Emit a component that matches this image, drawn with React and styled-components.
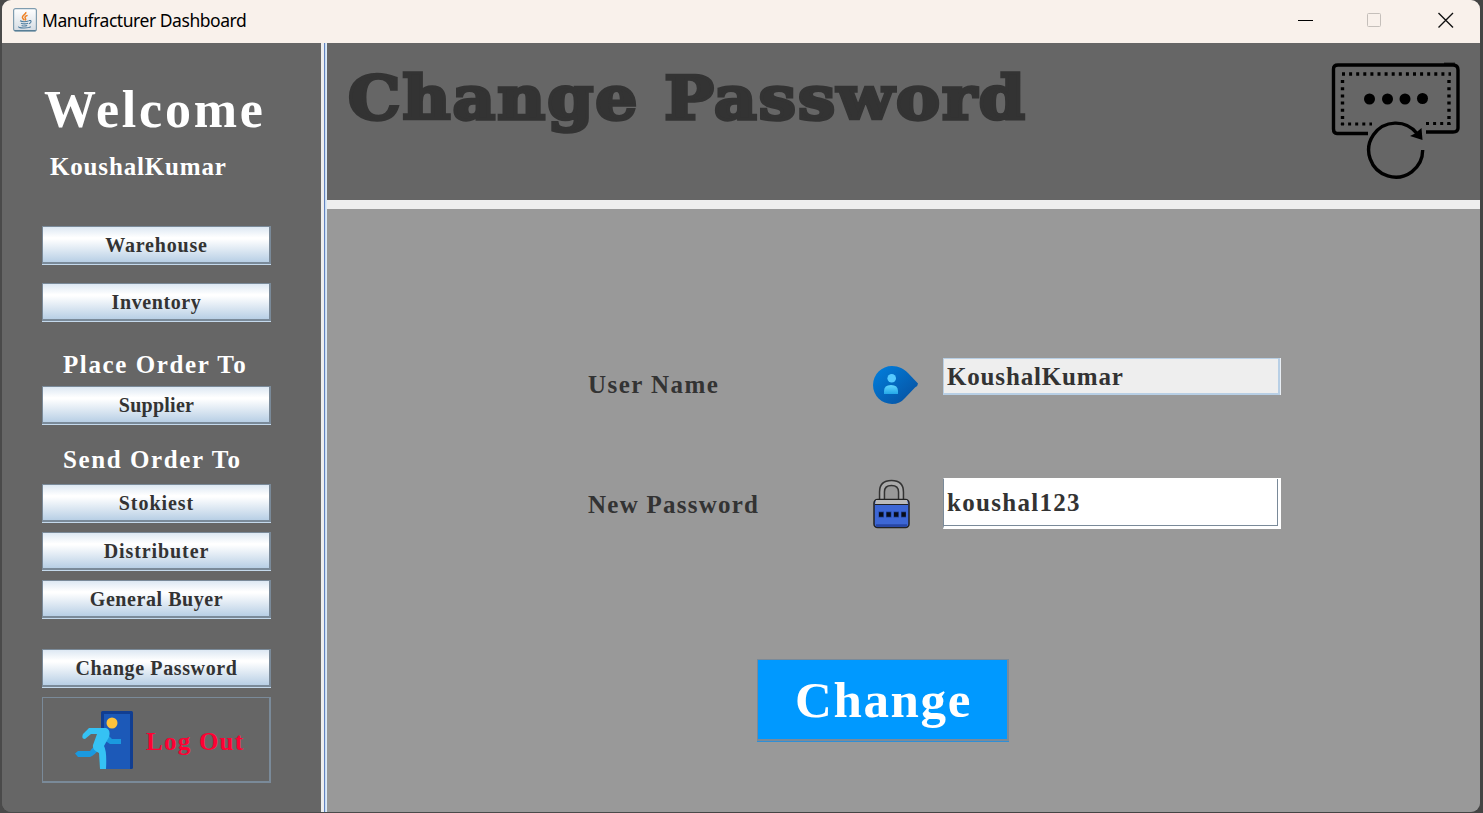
import React from "react";
import styled, { createGlobalStyle } from "styled-components";

const Global = createGlobalStyle`
  * { box-sizing: border-box; }
  body { margin: 0; background: #3a3b3c; overflow: hidden; }
`;

const Desktop = styled.div`
  width: 1483px;
  height: 813px;
  padding: 0 3px 1px 2px;
  background: linear-gradient(90deg, #4a4a4a 0 700px, #444 700px);
`;

const Frame = styled.div`
  display: flex;
  flex-direction: column;
  width: 1478px;
  height: 812px;
  border-radius: 9px;
  overflow: hidden;
  background: #666;
  color: #333;
  font-family: "Baskerville Old Face", "Liberation Serif", serif;
  font-weight: bold;
`;

const TitleBar = styled.header`
  display: flex;
  align-items: center;
  flex: none;
  height: 43px;
  padding: 0 25px 3px 11px;
  background: #f9f1eb;
  color: #000;
`;

const WindowTitle = styled.span`
  flex: 1;
  margin-left: 5px;
  font: 400 17.5px "Noto Sans", sans-serif;
  letter-spacing: -0.45px;
  white-space: nowrap;
`;

const Controls = styled.div`
  display: flex;
  gap: 50px;
  svg { display: block; }
  svg:last-child { margin-left: 2px; }
`;

const Content = styled.div`
  display: flex;
  flex: 1;
  min-height: 0;
`;

const Sidebar = styled.nav`
  display: flex;
  flex-direction: column;
  width: 319px;
  padding-left: 40px;
  background: #666;
  color: #fff;
`;

const Divider = styled.div`
  width: 6px;
  border-left: 3px solid #eee;
  background: linear-gradient(90deg, #6382bf 0 1px, #c8ddf2 1px 2px, #dceaf8 2px);
`;

const Text = styled.div`
  font-size: ${(p) => p.$size || 25}px;
  line-height: ${(p) => p.$line || 30}px;
  letter-spacing: ${(p) => p.$space}px;
  margin: ${(p) => p.$margin || 0};
  white-space: nowrap;
`;

const MenuButton = styled.button`
  display: block;
  flex: none;
  width: 229px;
  height: 38px;
  margin: ${(p) => p.$top}px 0 1px;
  padding: 1px 0 0 1px;
  border: solid #7a8a99;
  border-width: 1px 2px 2px 1px;
  background: linear-gradient(#dde8f3, #fff 30%, #fff 34%, #b8cfe5);
  box-shadow: 0 1px #c4d9ec;
  color: #333;
  font: bold 20px "Baskerville Old Face", "Liberation Serif", serif;
  letter-spacing: ${(p) => p.$space}px;
`;

const LogoutButton = styled.button`
  display: flex;
  align-items: center;
  flex: none;
  width: 229px;
  height: 86px;
  margin-top: 9px;
  padding: 1px 0 0 32px;
  gap: 13px;
  border: solid #7a8a99;
  border-width: 1px 2px 2px 1px;
  background: transparent;
  color: #ff0033;
  font: bold 25px "Baskerville Old Face", "Liberation Serif", serif;
  letter-spacing: 1.25px;
  white-space: nowrap;
  span { margin-top: 4px; }
`;

const Main = styled.main`
  display: flex;
  flex-direction: column;
  flex: 1;
  min-width: 0;
`;

const Banner = styled.div`
  display: flex;
  justify-content: space-between;
  align-items: flex-start;
  height: 166px;
  padding: 18px 19px 0 21px;
  border-bottom: 9px solid #eee;
  background: #666;
`;

const Heading = styled.h1`
  margin: 0;
  font: bold 60px/74px "Cooper Black", "DejaVu Serif", serif;
  letter-spacing: 1.8px;
  color: #333;
  -webkit-text-stroke: 3.4px #333;
  transform: scaleX(1.1);
  transform-origin: left;
  white-space: nowrap;
`;

const Form = styled.form`
  flex: 1;
  padding: 149px 0 0 261px;
  background: #999;
`;

const Field = styled.label`
  display: grid;
  grid-template-columns: 284px 71px 338px;
  align-items: start;
  height: 120px;
`;

const Input = styled.input`
  width: ${(p) => (p.readOnly ? 337 : 338)}px;
  height: ${(p) => (p.readOnly ? 37 : 51)}px;
  padding: ${(p) => (p.readOnly ? 2 : 1)}px 0 0 3px;
  border: solid ${(p) => (p.readOnly ? "#b8cfe5" : "#fff")};
  border-width: ${(p) => (p.readOnly ? "1px 2px 2px 1px" : "1px 3px 3px 1px")};
  border-left-color: ${(p) => (p.readOnly ? "#b8cfe5" : "#7a8a99")};
  outline: 0;
  background: ${(p) => (p.readOnly ? "#eee" : "#fff")};
  box-shadow: ${(p) => (p.readOnly ? "1px 0 #e8eef4" : "inset -1px -1px #7a8a99")};
  color: #333;
  font: bold 25px "Baskerville Old Face", "Liberation Serif", serif;
  letter-spacing: ${(p) => p.$space}px;
`;

const ChangeButton = styled.button`
  display: block;
  width: 252px;
  height: 82px;
  margin: 61px 0 0 169px;
  padding: 1px 0 0 2px;
  border: solid #7a8a99;
  border-width: 1px 2px 2px 1px;
  background: #0099ff;
  box-shadow: 0 1px #2f8fd6;
  color: #fff;
  font: bold 51px "Baskerville Old Face", "Liberation Serif", serif;
  letter-spacing: 1.6px;
`;

const JavaIcon = () => (
  <svg width="24" height="24" viewBox="0 0 24 24" fill="none">
    <defs>
      <linearGradient id="java" x1="0" y1="0" x2="0" y2="1">
        <stop stopColor="#fff" /><stop offset="1" stopColor="#d5dce3" />
      </linearGradient>
    </defs>
    <rect x=".6" y=".6" width="22.8" height="22.3" rx="2" fill="url(#java)" stroke="#7f9caf" strokeWidth="1.2" />
    <path d="M1.5 22.8h21" stroke="#3f6c86" />
    <path d="M12.8 4c1 2-4 3.200-3.400 5.600.3 1 1.500 1.700 1.800 2.700M14.600 7.400c-2 .6-3.200 1.600-2.300 2.800.7.900.5 1.600-.2 2.200" stroke="#ee8124" strokeWidth="1.500" />
    <path d="M7 12.800c2 1 6 .9 8.500.1M8 15.200c2 .8 5 .8 7.200.1M8.600 17.400c1.500.7 4 .7 5.600.1M15.800 12.600c3-.8 2.900 2.200.3 3M5.600 18.600c-.8 1.700 10 2 12.200.1" stroke="#4f7d9f" strokeWidth="1.100" />
  </svg>
);

const PasswordIcon = () => (
  <svg width="130" height="120" viewBox="0 0 130 120" fill="none" stroke="#000">
    <path d="M37 72.500H6Q2.500 72.500 2.500 68V8Q2.500 4 7 4H122Q127 4 127 9V67Q127 71 122 71H95" strokeWidth="3.400" />
    <path d="M113 2.200h11" strokeWidth="1" />
    <path d="M11 13H120" strokeWidth="3.600" strokeDasharray="3 4.100" />
    <path d="M11.500 19V64M118 19V64" strokeWidth="3.400" strokeDasharray="3 4.200" />
    <path d="M10 63H41M95 62.500H120" strokeWidth="3.200" strokeDasharray="3 4.100" />
    <g fill="#000" stroke="none">
      <circle cx="38.500" cy="38" r="5.500" /><circle cx="56.500" cy="38" r="5.500" />
      <circle cx="74" cy="38" r="5.500" /><circle cx="91.500" cy="37.500" r="5.500" />
      <path d="M90.500 67L91.500 79 79 75 84 72.500Z" />
    </g>
    <path d="M91.700 89A27 27 0 1 1 86 72.500" strokeWidth="3.400" />
  </svg>
);

const LogoutIcon = () => (
  <svg width="58" height="58" viewBox="0 0 58 58">
    <rect x="26" y="0" width="32" height="58" rx="1.500" fill="#113e91" />
    <rect x="29" y="3" width="26" height="55" fill="#1c59b8" />
    <circle cx="37" cy="12" r="5.500" fill="#ffc33b" />
    <path d="M21 33L15 40H3L0 42.500 3 46H15Q20 44 26 36ZM32 23L37 28H46V33H35L29 29Z" fill="#1a99df" />
    <path d="M14 17H31Q36 19 34 26L29 35Q32 40 31 58H25L24 42Q17 39 18 34L22 23H16L10 28Q6 28 8 23Z" fill="#35c2f4" />
  </svg>
);

const FieldIcon = styled.svg`
  display: block;
  margin: ${(p) => p.$top}px 0 0 1px;
`;

const UserIcon = () => (
  <FieldIcon $top={8} width="45" height="38" viewBox="0 0 45 38">
    <defs>
      <linearGradient id="pin" x1="0" y1="0" x2="1" y2="1">
        <stop stopColor="#0080df" /><stop offset="1" stopColor="#084e9c" />
      </linearGradient>
      <linearGradient id="person" x1="0" y1="0" x2="0" y2="1">
        <stop stopColor="#62d6ff" /><stop offset="1" stopColor="#24a8e8" />
      </linearGradient>
    </defs>
    <path d="M19 0C26 0 31 3 35 7L45 17.500Q45 20 42 21.500L32 32Q27 38 19 38A19 19 0 0 1 19 0Z" fill="url(#pin)" />
    <circle cx="18.700" cy="12.300" r="4.300" fill="#55caff" />
    <path d="M11 28V25Q11 19 18 19T25 25V28Z" fill="url(#person)" />
  </FieldIcon>
);

const LockIcon = () => (
  <FieldIcon $top={1} width="37" height="50" viewBox="0 0 37 50">
    <path d="M9 22V13Q9 4 18.500 4T28 13V22" fill="none" stroke="#333" strokeWidth="6.400" />
    <path d="M9 22V13Q9 4 18.500 4T28 13V22" fill="none" stroke="#aaa" strokeWidth="3.400" />
    <rect x="1" y="20.500" width="35" height="28" rx="3.500" fill="#3d67d5" stroke="#222" strokeWidth="1.500" />
    <path d="M3 21H34L35 25H2Z" fill="#bbb" />
    <path d="M2 25.500H35" stroke="#222" strokeWidth="1.200" />
    <path d="M3 46.500H34" stroke="#2746a5" strokeWidth="2.500" />
    <path d="M5.500 35.500H33" stroke="#24469d" strokeWidth="6" strokeDasharray="5.500 2" />
    <path d="M6 35.500H33" stroke="#080c19" strokeWidth="4.400" strokeDasharray="4.300 3.200" />
  </FieldIcon>
);

export default function App() {
  return (
    <Desktop>
      <Global />
      <Frame>
        <TitleBar>
          <JavaIcon />
          <WindowTitle>Manufracturer Dashboard</WindowTitle>
          <Controls>
            <svg width="20" height="18"><path d="M3 9.500H18" stroke="#000" strokeWidth="1" /></svg>
            <svg width="20" height="18" fill="none"><rect x="2.500" y="2.500" width="13" height="13" rx="1" stroke="#c5bfba" /></svg>
            <svg width="18" height="18"><path d="M1.500 2L16 16.500M16 2L1.500 16.500" stroke="#111" strokeWidth="1.400" /></svg>
          </Controls>
        </TitleBar>
        <Content>
          <Sidebar>
            <Text $size={52} $line={60} $space={2.8} $margin="37px 0 0 2px">Welcome</Text>
            <Text $space={0.83} $margin="12px 0 0 8px">KoushalKumar</Text>
            <MenuButton $top={44} $space={0.8}>Warehouse</MenuButton>
            <MenuButton $top={18} $space={0.6}>Inventory</MenuButton>
            <Text $space={1.6} $margin="28px 0 0 21px">Place Order To</Text>
            <MenuButton $top={6} $space={0.25}>Supplier</MenuButton>
            <Text $space={1.6} $margin="20px 0 0 21px">Send Order To</Text>
            <MenuButton $top={9} $space={0.95}>Stokiest</MenuButton>
            <MenuButton $top={9} $space={0.9}>Distributer</MenuButton>
            <MenuButton $top={9} $space={0.56}>General Buyer</MenuButton>
            <MenuButton $top={30} $space={0.62}>Change Password</MenuButton>
            <LogoutButton><LogoutIcon /><span>Log Out</span></LogoutButton>
          </Sidebar>
          <Divider />
          <Main>
            <Banner>
              <Heading>Change Password</Heading>
              <PasswordIcon />
            </Banner>
            <Form onSubmit={(e) => e.preventDefault()}>
              <Field>
                <Text $space={1.45} $margin="12px 0 0">User Name</Text>
                <UserIcon />
                <Input readOnly $space={0.83} value="KoushalKumar" />
              </Field>
              <Field>
                <Text $space={1.25} $margin="12px 0 0">New Password</Text>
                <LockIcon />
                <Input $space={1.3} defaultValue="koushal123" />
              </Field>
              <ChangeButton>Change</ChangeButton>
            </Form>
          </Main>
        </Content>
      </Frame>
    </Desktop>
  );
}
